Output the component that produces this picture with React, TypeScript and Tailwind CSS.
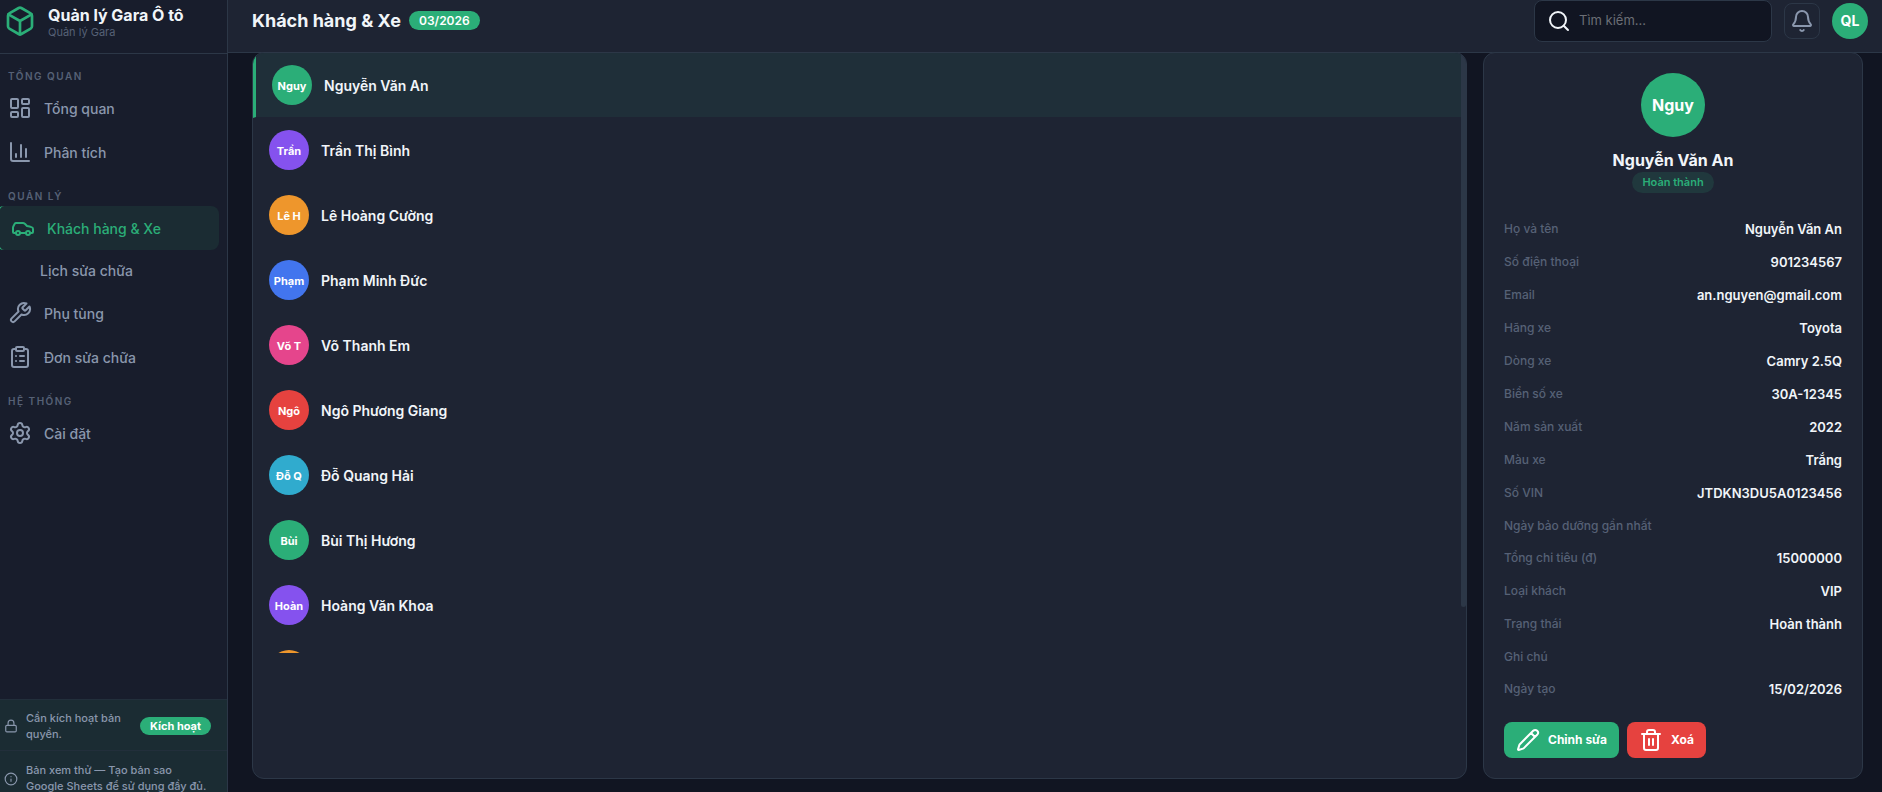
import type { ReactNode } from "react";

interface Customer {
    short: string;
    name: string;
    color: string;
}

const customers: Customer[] = [
    { short: "Nguy", name: "Nguyễn Văn An", color: "bg-[#2bae78]" },
    { short: "Trần", name: "Trần Thị Bình", color: "bg-[#8552ee]" },
    { short: "Lê H", name: "Lê Hoàng Cường", color: "bg-[#ee962c]" },
    { short: "Phạm", name: "Phạm Minh Đức", color: "bg-[#4275ee]" },
    { short: "Võ T", name: "Võ Thanh Em", color: "bg-[#e5458c]" },
    { short: "Ngô", name: "Ngô Phương Giang", color: "bg-[#e6423f]" },
    { short: "Đỗ Q", name: "Đỗ Quang Hải", color: "bg-[#30abce]" },
    { short: "Bùi", name: "Bùi Thị Hương", color: "bg-[#2bae78]" },
    { short: "Hoàn", name: "Hoàng Văn Khoa", color: "bg-[#8552ee]" },
    { short: "", name: "", color: "bg-[#ee962c]" },
];

const details = [
    ["Họ và tên", "Nguyễn Văn An"],
    ["Số điện thoại", "901234567"],
    ["Email", "an.nguyen@gmail.com"],
    ["Hãng xe", "Toyota"],
    ["Dòng xe", "Camry 2.5Q"],
    ["Biển số xe", "30A-12345"],
    ["Năm sản xuất", "2022"],
    ["Màu xe", "Trắng"],
    ["Số VIN", "JTDKN3DU5A0123456"],
    ["Ngày bảo dưỡng gần nhất", ""],
    ["Tổng chi tiêu (đ)", "15000000"],
    ["Loại khách", "VIP"],
    ["Trạng thái", "Hoàn thành"],
    ["Ghi chú", ""],
    ["Ngày tạo", "15/02/2026"],
];

function Icon({ className = "size-6", children }: { className?: string; children: ReactNode }) {
    return (
        <svg viewBox="0 0 24 24" fill="none" stroke="currentColor" strokeWidth="2" strokeLinecap="round" strokeLinejoin="round" className={`shrink-0 ${className}`} aria-hidden="true">
            {children}
        </svg>
    );
}

function NavLabel({ children }: { children: ReactNode }) {
    return <h2 className="pl-3 pt-4 pb-1 text-[10px] leading-3 font-semibold tracking-[1.5px] text-[#566176]">{children}</h2>;
}

function NavItem({ active, icon, children }: { active?: boolean; icon: ReactNode; children: ReactNode }) {
    return (
        <a href="#" className={`flex h-11 items-center gap-3 rounded-lg pl-3 text-sm font-medium ${active ? "border-l-3 border-[#2bae78] bg-[#1b2c33] text-[#2bae78]" : "text-[#8a97ad]"}`}>
            <Icon>{icon}</Icon>
            <span className="pt-px">{children}</span>
        </a>
    );
}

function Sidebar() {
    return (
        <aside className="flex w-57 shrink-0 flex-col overflow-hidden border-r border-[#2c3747] bg-[#181d2c]">
            <div className="flex h-[54px] shrink-0 items-start gap-3 border-b border-[#2c3747] pt-[5px] pl-1">
                <Icon className="size-8 text-[#2bae78]">
                    <path d="M21 16V8a2 2 0 0 0-1-1.73l-7-4a2 2 0 0 0-2 0l-7 4A2 2 0 0 0 3 8v8a2 2 0 0 0 1 1.73l7 4a2 2 0 0 0 2 0l7-4A2 2 0 0 0 21 16z" />
                    <path d="M3.3 7 12 12l8.7-5M12 22V12" />
                </Icon>
                <div>
                    <p className="text-base leading-5 font-bold text-[#f1f5f9]">Quản lý Gara Ô tô</p>
                    <p className="text-[11px] leading-[14px] text-[#566176]">Quản lý Gara</p>
                </div>
            </div>
            <nav className="-ml-1 flex-1 pr-2">
                <NavLabel>TỔNG QUAN</NavLabel>
                <NavItem icon={<><rect x="3" y="3" width="7" height="9" rx="1" /><rect x="14" y="3" width="7" height="5" rx="1" /><rect x="14" y="12" width="7" height="9" rx="1" /><rect x="3" y="16" width="7" height="5" rx="1" /></>}>Tổng quan</NavItem>
                <NavItem icon={<path d="M3 3v16a2 2 0 0 0 2 2h16M18 17V9M13 17V5M8 17v-3" />}>Phân tích</NavItem>
                <NavLabel>QUẢN LÝ</NavLabel>
                <NavItem active icon={<><path d="M19 17h2c.6 0 1-.4 1-1v-3c0-.9-.7-1.7-1.5-1.9C18.7 10.6 16 10 16 10s-1.3-1.4-2.2-2.3c-.5-.4-1.1-.7-1.8-.7H5c-.6 0-1.1.4-1.4.9l-1.4 2.9A3.7 3.7 0 0 0 2 12v4c0 .6.4 1 1 1h2M9 17h6" /><circle cx="7" cy="17" r="2" /><circle cx="17" cy="17" r="2" /></>}>Khách hàng &amp; Xe</NavItem>
                <a href="#" className="flex h-[41px] items-center pl-11 text-sm font-medium text-[#8a97ad]">Lịch sửa chữa</a>
                <NavItem icon={<path d="M14.7 6.3a1 1 0 0 0 0 1.4l1.6 1.6a1 1 0 0 0 1.4 0l3.77-3.77a6 6 0 0 1-7.94 7.94l-6.91 6.91a2.12 2.12 0 0 1-3-3l6.91-6.91a6 6 0 0 1 7.94-7.94l-3.76 3.76z" />}>Phụ tùng</NavItem>
                <NavItem icon={<><rect x="8" y="2" width="8" height="4" rx="1" /><path d="M16 4h2a2 2 0 0 1 2 2v14a2 2 0 0 1-2 2H6a2 2 0 0 1-2-2V6a2 2 0 0 1 2-2h2M12 11h4M12 16h4M8 11h.01M8 16h.01" /></>}>Đơn sửa chữa</NavItem>
                <NavLabel>HỆ THỐNG</NavLabel>
                <NavItem icon={<><path d="M9.671 4.136a2.34 2.34 0 0 1 4.659 0 2.34 2.34 0 0 0 3.319 1.915 2.34 2.34 0 0 1 2.33 4.033 2.34 2.34 0 0 0 0 3.831 2.34 2.34 0 0 1-2.33 4.033 2.34 2.34 0 0 0-3.319 1.915 2.34 2.34 0 0 1-4.659 0 2.34 2.34 0 0 0-3.32-1.915 2.34 2.34 0 0 1-2.33-4.033 2.34 2.34 0 0 0 0-3.831A2.34 2.34 0 0 1 6.35 6.051a2.34 2.34 0 0 0 3.319-1.915" /><circle cx="12" cy="12" r="3" /></>}>Cài đặt</NavItem>
            </nav>
            <div className="flex h-13 shrink-0 items-center gap-2 border-y border-[#222f3b] bg-[#1b2c33] pt-0.5 pr-4 pl-1 text-[11px] leading-4 font-medium text-[#8a97ad]">
                <Icon className="size-3.5">
                    <rect x="3" y="11" width="18" height="11" rx="2" />
                    <path d="M7 11V7a5 5 0 0 1 10 0v4" />
                </Icon>
                <p className="flex-1">Cần kích hoạt bản quyền.</p>
                <button className="rounded-full bg-[#2bae78] px-2.5 leading-[18px] font-bold text-white">Kích hoạt</button>
            </div>
            <div className="flex h-[41px] shrink-0 items-start gap-2 bg-[#1b2c33] pt-[11px] pr-4 pl-1 text-[11px] leading-4 font-medium text-[#8a97ad]">
                <Icon className="mt-2.5 size-3.5">
                    <circle cx="12" cy="12" r="10" />
                    <path d="M12 16v-4M12 8h.01" />
                </Icon>
                <p>Bản xem thử — Tạo bản sao Google Sheets để sử dụng đầy đủ.</p>
            </div>
        </aside>
    );
}

function Header() {
    return (
        <header className="flex h-[53px] shrink-0 items-start gap-3 border-b border-[#2c3747] bg-[#1e2433] pr-[14px] pl-6">
            <div className="flex h-[41px] flex-1 items-center gap-2">
                <h1 className="text-lg leading-7 font-bold text-[#f1f5f9]">Khách hàng &amp; Xe</h1>
                <span className="rounded-full bg-[#2bae78] px-2.5 text-xs leading-[19px] font-semibold text-white">03/2026</span>
            </div>
            <label className="flex h-[42px] w-[238px] items-center gap-2 rounded-lg border border-[#2c3747] bg-[#111522] px-3 text-[#f1f5f9]">
                <Icon>
                    <circle cx="11" cy="11" r="8" />
                    <path d="m21 21-4.3-4.3" />
                </Icon>
                <input type="text" aria-label="Tìm kiếm" placeholder="Tìm kiếm..." className="w-full min-w-0 bg-transparent text-[13px] outline-none placeholder:text-[#6b6e75]" />
            </label>
            <button aria-label="Thông báo" className="mt-[3px] flex size-9 items-center justify-center rounded-lg border border-[#2c3747] text-[#8a97ad]">
                <Icon>
                    <path d="M10.268 21a2 2 0 0 0 3.464 0M3.262 15.326A1 1 0 0 0 4 17h16a1 1 0 0 0 .74-1.673C19.41 13.956 18 12.499 18 8A6 6 0 0 0 6 8c0 4.499-1.411 5.956-2.738 7.326" />
                </Icon>
            </button>
            <button className="mt-[3px] size-9 rounded-full bg-[#2bae78] text-sm font-bold text-white">QL</button>
        </header>
    );
}

function CustomerList() {
    return (
        <section className="min-w-0 flex-1 overflow-hidden rounded-xl border border-[#2c3747] bg-[#1e2433]">
            <div className="flex h-[600px] overflow-hidden">
                <ul className="flex-1">
                    {customers.map((c, i) => (
                        <li key={i} className={`flex h-[65px] items-start gap-3 border-b border-b-[#1e2433] px-4 pt-3 ${i === 0 ? "border-l-3 border-l-[#2bae78] bg-[#1f2f39]" : ""}`}>
                            <span className={`flex size-10 shrink-0 items-center justify-center rounded-full pt-0.5 text-[11px] font-bold text-white ${c.color}`}>{c.short}</span>
                            <span className="text-sm leading-[42px] font-semibold text-[#f1f5f9]">{c.name}</span>
                        </li>
                    ))}
                </ul>
                <div className="h-[554px] w-[5px] rounded-b-full bg-[#2c3747]" />
            </div>
        </section>
    );
}

function DetailPanel() {
    return (
        <section className="w-95 shrink-0 rounded-xl border border-[#2c3747] bg-[#1e2433] p-5">
            <div className="flex flex-col items-center">
                <span className="flex size-16 items-center justify-center rounded-full bg-[#2bae78] text-base font-bold text-white">Nguy</span>
                <h2 className="mt-3 text-base leading-[23px] font-bold text-[#f1f5f9]">Nguyễn Văn An</h2>
                <span className="rounded-full bg-[#20383d] px-2.5 text-[11px] leading-[21px] font-semibold text-[#2bae78]">Hoàn thành</span>
            </div>
            <dl className="mt-5">
                {details.map(([label, value]) => (
                    <div key={label} className="flex items-start justify-between py-1.5">
                        <dt className="text-xs leading-5 font-medium text-[#566176]">{label}</dt>
                        <dd className="text-[13px] leading-[21px] font-semibold text-[#f1f5f9]">{value}</dd>
                    </div>
                ))}
            </dl>
            <div className="mt-4 flex gap-2">
                <button className="flex h-9 items-center gap-2 rounded-lg bg-[#2bae78] px-3 text-xs font-bold text-white">
                    <Icon>
                        <path d="M21.174 6.812a1 1 0 0 0-3.986-3.987L3.842 16.174a2 2 0 0 0-.5.83l-1.321 4.352a.5.5 0 0 0 .623.622l4.353-1.32a2 2 0 0 0 .83-.497zM15 5l4 4" />
                    </Icon>
                    Chỉnh sửa
                </button>
                <button className="flex h-9 items-center gap-2 rounded-lg bg-[#e6423f] px-3 text-xs font-bold text-white">
                    <Icon>
                        <path d="M3 6h18M19 6v14a2 2 0 0 1-2 2H7a2 2 0 0 1-2-2V6M8 6V4a2 2 0 0 1 2-2h4a2 2 0 0 1 2 2v2M10 11v6M14 11v6" />
                    </Icon>
                    Xoá
                </button>
            </div>
        </section>
    );
}

export default function App() {
    return (
        <div className="flex h-screen overflow-hidden bg-[#111522] font-[Inter,sans-serif]">
            <Sidebar />
            <div className="flex min-w-0 flex-1 flex-col">
                <Header />
                <main className="-mt-px flex items-stretch gap-4 pr-[19px] pl-6">
                    <CustomerList />
                    <DetailPanel />
                </main>
            </div>
        </div>
    );
}
